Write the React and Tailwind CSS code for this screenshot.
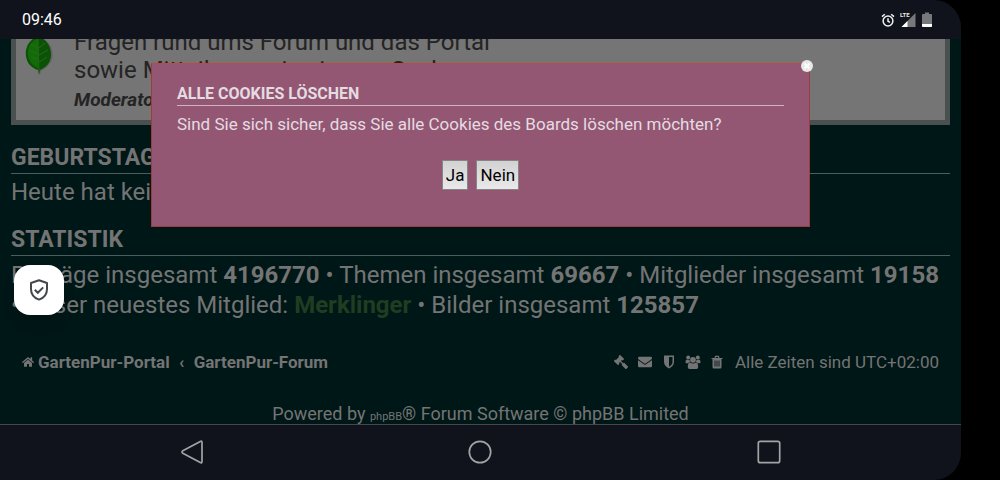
import { FaHome, FaEnvelope, FaGavel } from 'react-icons/fa';

const StatusBar = () => (
    <header className="h-[39px] shrink-0 flex items-center justify-between pl-[22px] pr-7 bg-[#10131b] text-white rounded-tr-[27px]">
        <span className="text-base">09:46</span>
        <div className="flex items-center gap-[5px]">
            <svg className="w-3.5 h-3.5" viewBox="0 0 14 14" fill="none" stroke="#f0f0f0" strokeWidth="1.5" role="img" aria-label="Wecker">
                <circle cx="7" cy="8" r="4.9" />
                <path d="M7 5.2v3l2 1.1M1 3.6 3.8 1.2M13 3.6 10.2 1.2" />
            </svg>
            <svg className="w-4 h-4" viewBox="0 0 16 16" role="img" aria-label="LTE">
                <path d="M15.5 1v14H1.5z" fill="#77787c" />
                <path d="M7.5 9v6H1.5z" fill="#fff" />
                <path d="M0 0h9.500v6H0z" fill="#10131b" />
                <text x="0" y="5" fontSize="6" fontWeight="700" fill="#e8e8e8">LTE</text>
            </svg>
            <svg className="w-3 h-4" viewBox="0 0 12 16" role="img" aria-label="Akku">
                <path d="M4 .5h4V2h2.2q.8 0 .8.8V12H1V2.800Q1 2 1.800 2H4z" fill="#77787c" />
                <path d="M1 12h10v2.200q0 .8-.8.8H1.800q-.8 0-.8-.8z" fill="#fff" />
            </svg>
        </div>
    </header>
);

const Leaf = () => (
    <svg className="w-8 h-10 shrink-0" viewBox="0 0 32 40" aria-hidden="true">
        <path d="M18 2C27 7 30 15 28 23q-2 7-11 12l-1 4-1-5z" fill="#555" opacity=".6" />
        <path d="M14 0C5 4 1 11 2 20c1 8 6 12 12 14l1 5 1-5c7-3 11-8 11-16C27 10 22 3 14 0z" fill="#0c5206" />
        <path d="M14 2C7 6 3 11 4 19c1 7 5 11 10 13z" fill="#126b08" />
        <path d="M14 3l1 34M14 12 7 8M14 18 5 14M15 24 7 21M15 12l6-5M15 19l9-5M15 26l8-5" stroke="#2a7016" strokeWidth=".8" fill="none" />
    </svg>
);

const SectionTitle = ({ children }) => (
    <h3 className="pt-0.5 text-[23px] leading-[30px] font-bold border-b border-[#4d5c5c]">{children}</h3>
);

const ShieldHalf = () => (
    <svg className="w-3 h-3.5" viewBox="0 0 12 14" aria-hidden="true">
        <path d="M1 .5h10v6.500c0 3-2 5-5 6.500C3 12 1 10 1 7z" fill="currentColor" />
        <path d="M6 2h3.500v5c0 2-1.500 3.500-3.500 4.700z" fill="#001717" />
    </svg>
);

const Team = () => (
    <svg className="w-4 h-3.5" viewBox="0 0 16 14" fill="currentColor" aria-hidden="true">
        <circle cx="3.200" cy="2.400" r="2" />
        <circle cx="12.800" cy="2.400" r="2" />
        <circle cx="8" cy="4.800" r="2.900" />
        <path d="M.5 7.500Q.3 4.800 1.800 4.500q1.400.8 2.800.2Q4.500 6.300 5.400 7.200 3.800 7.300 3 8.200H1.300Q.5 8.200.5 7.500zM15.500 7.500q.2-2.700-1.300-3-1.400.8-2.800.2.100 1.600-.8 2.500 1.600.1 2.400 1h1.700q.8 0 .8-.7z" />
        <path d="M2.800 12.200C2.800 9.500 3.400 7.800 5 7.600q3 1.800 6 0c1.600.2 2.200 1.900 2.200 4.600q0 1.700-1.700 1.700h-7q-1.700 0-1.700-1.700z" />
    </svg>
);

const Trash = () => (
    <svg className="w-3 h-3.5" viewBox="0 0 12 14" aria-hidden="true">
        <path d="M.5 3.500h11M4 3l.6-1.600h2.800L8 3" stroke="currentColor" strokeWidth="1.200" fill="none" />
        <path d="M1.500 3.500h9v8.500q0 1.500-1.200 1.500H2.700Q1.500 13.500 1.500 12z" fill="currentColor" />
        <path d="M4 5.500v6M6 5.500v6M8 5.500v6" stroke="#001717" strokeWidth=".9" />
    </svg>
);

const footerLinks = [
    { label: 'Impressum', icon: <FaGavel className="w-3.5 h-3.5 -scale-x-100" /> },
    { label: 'Kontakt', icon: <FaEnvelope className="w-3.5 h-3.5" /> },
    { label: 'Datenschutz', icon: <ShieldHalf /> },
    { label: 'Das Team', icon: <Team /> },
    { label: 'Alle Cookies löschen', icon: <Trash /> },
];

const Forum = () => (
    <div className="px-[11px] text-[#747474]">
        <section className="-mt-[11px] flex gap-[18px] pl-2 pb-1 border-[5px] border-t-0 border-[#4a5050] bg-[#757575] text-[#242424]">
            <div className="pt-2">
                <Leaf />
            </div>
            <div>
                <p className="w-[440px] text-2xl leading-7">
                    Fragen rund ums Forum und das Portal sowie Mitteilungen in eigener Sache.
                </p>
                <p className="text-[19px] leading-8 font-bold italic">Moderatoren</p>
            </div>
        </section>

        <section className="mt-4">
            <SectionTitle>GEBURTSTAGE</SectionTitle>
            <p className="mt-1 text-2xl leading-7">Heute hat kein Mitglied Geburtstag</p>
        </section>

        <section className="mt-[17px]">
            <SectionTitle>STATISTIK</SectionTitle>
            <p className="mt-1 text-2xl leading-[30px]">
                Beiträge insgesamt <strong>4196770</strong> • Themen insgesamt <strong>69667</strong> • Mitglieder insgesamt <strong>19158</strong> • Unser neuestes Mitglied: <a href="#merklinger" className="font-bold text-[#213d21]">Merklinger</a> • Bilder insgesamt <strong>125857</strong>
            </p>
        </section>

        <nav className="mt-7 px-[11px] flex items-center justify-between text-[17px] leading-7">
            <div className="flex items-center font-bold">
                <a href="#portal" className="flex items-center gap-1">
                    <FaHome className="w-3 h-3" />
                    GartenPur-Portal
                </a>
                <span className="w-6 text-center">‹</span>
                <a href="#forum">GartenPur-Forum</a>
            </div>
            <div className="flex items-center">
                {footerLinks.map(({ label, icon }) => (
                    <a key={label} href="#" aria-label={label} className="w-6 flex justify-center">{icon}</a>
                ))}
                <span className="ml-1.5">Alle Zeiten sind UTC+02:00</span>
            </div>
        </nav>

        <p className="mt-7 text-lg leading-5 text-center">
            Powered by <span className="text-[11px] leading-none">phpBB</span>® Forum Software © phpBB Limited
        </p>
    </div>
);

const CookieDialog = () => (
    <div role="dialog" aria-labelledby="dialog-title" className="relative w-[659px] px-[25px] pt-[18px] pb-9 border border-[#9c3c3c] border-t-[#c04844] bg-[#935774] text-[#e4dce0]">
        <button aria-label="Schließen" className="absolute -top-1 -right-1 w-3 h-3 rounded-full bg-[#e8e8e8] flex items-center justify-center">
            <svg className="w-1.5 h-1.5" viewBox="0 0 6 6" stroke="#fff" strokeWidth="1.800">
                <path d="M.5.5l5 5M5.500.5l-5 5" />
            </svg>
        </button>
        <h3 id="dialog-title" className="text-base leading-[23px] font-bold border-b border-[#cdb2bf]">ALLE COOKIES LÖSCHEN</h3>
        <p className="mt-1.5 text-[17px] leading-6">Sind Sie sich sicher, dass Sie alle Cookies des Boards löschen möchten?</p>
        <div className="mt-6 flex justify-center gap-2 text-[17px] leading-6 text-black">
            <button className="h-[30px] px-[3px] border border-[#858585] bg-linear-to-b from-[#d2d2d2] to-[#e9e9e9]">Ja</button>
            <button className="h-[30px] px-[3px] border border-[#858585] bg-linear-to-b from-[#d2d2d2] to-[#e9e9e9]">Nein</button>
        </div>
    </div>
);

const NavigationBar = () => (
    <footer className="h-14 shrink-0 px-12 pb-0.5 flex items-center justify-around border-t border-[#47474f] bg-[#10131b] text-[#a3a3a6] rounded-br-[27px]">
        <button aria-label="Zurück">
            <svg className="w-6 h-6" viewBox="0 0 24 24" fill="none" stroke="currentColor" strokeWidth="1.700" strokeLinejoin="round">
                <path d="M20.300 1.500Q22 .6 22 2.500v19q0 1.900-1.700 1L2.800 13.200q-1.600-1.200 0-2.400z" />
            </svg>
        </button>
        <button aria-label="Startseite">
            <svg className="w-6 h-6" viewBox="0 0 24 24" fill="none" stroke="currentColor" strokeWidth="1.700">
                <circle cx="12" cy="12" r="10.700" />
            </svg>
        </button>
        <button aria-label="Übersicht">
            <svg className="w-6 h-6" viewBox="0 0 24 24" fill="none" stroke="currentColor" strokeWidth="1.700">
                <rect x="1.300" y="1.300" width="21.400" height="21.400" rx="2" />
            </svg>
        </button>
    </footer>
);

const App = () => {
    return (
        <div className="min-h-screen bg-black pr-[39px] flex flex-col font-['Roboto',sans-serif]">
            <StatusBar />
            <main className="relative flex-1 overflow-hidden bg-[#001717]">
                <Forum />
                <div className="absolute inset-x-0 top-6 flex justify-center">
                    <CookieDialog />
                </div>
                <button aria-label="Datenschutz" className="absolute left-3.5 top-[226px] w-[50px] h-[50px] rounded-2xl bg-white shadow-lg flex items-center justify-center">
                    <svg className="w-6 h-6" viewBox="0 0 24 24" fill="none" stroke="#45474b" strokeWidth="2">
                        <path d="M12 2.200 20 5v6c0 5-3.200 9-8 10.600C7.200 20 4 16 4 11V5z" strokeLinejoin="round" />
                        <path d="M7.800 11.800l3 3 5.400-5.400" />
                    </svg>
                </button>
            </main>
            <NavigationBar />
        </div>
    );
};

export default App;
